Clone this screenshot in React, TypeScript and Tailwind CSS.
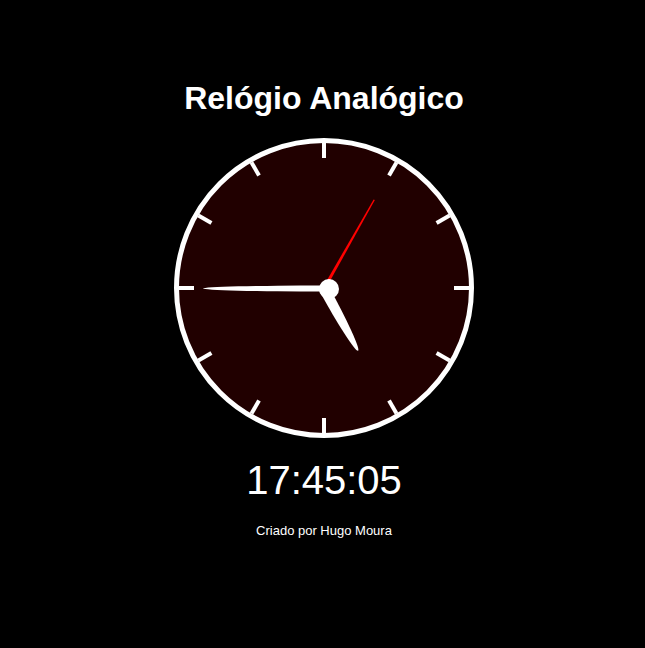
import React from "react";

export default function App() {
  const ticks = Array.from({ length: 12 }, (_, i) => i * 30);
  return (
    <div className="min-h-[648px] w-full bg-black pl-[3px] flex flex-col items-center text-white" style={{ fontFamily: '"Liberation Sans", Arial, sans-serif' }}>
      <h1 className="mt-[82px] h-[32px] text-[32px] leading-[32px] font-bold">Relógio Analógico</h1>
      <div className="mt-[24px] w-[300px] h-[300px]">
        <svg width="300" height="300" viewBox="0 0 300 300">
          <circle cx="150" cy="150" r="147.5" fill="#210000" stroke="#ffffff" strokeWidth="5" />
          {ticks.map((a) => (
            <line key={a} x1="150" y1="5" x2="150" y2="20" stroke="#ffffff" strokeWidth="4" transform={`rotate(${a} 150 150)`} />
          ))}
          <g transform="translate(150 150.5)">
            <path d="M -3.1 0 A 3.1 121 0 0 1 3.1 0 Z" fill="#ffffff" transform="rotate(270)" />
            <path d="M -5.2 0 A 5.2 71 0 0 1 5.2 0 Z" fill="#ffffff" transform="rotate(151.3)" />
            <polygon points="-1.6,0 1.6,0 0.7,-102 -0.7,-102" fill="#ff0000" transform="rotate(29.5)" />
          </g>
          <circle cx="155" cy="151" r="10" fill="#ffffff" />
        </svg>
      </div>
      <div className="mt-[22px] h-[40px] text-[40px] leading-[40px]">17:45:05</div>
      <div className="mt-[24px] h-[13px] text-[13px] leading-[13px]">Criado por Hugo Moura</div>
    </div>
  );
}
